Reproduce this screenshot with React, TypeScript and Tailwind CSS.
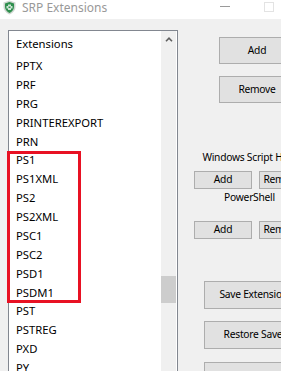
import React from "react";

const items = [
  "PPTX",
  "PRF",
  "PRG",
  "PRINTEREXPORT",
  "PRN",
  "PS1",
  "PS1XML",
  "PS2",
  "PS2XML",
  "PSC1",
  "PSC2",
  "PSD1",
  "PSDM1",
  "PST",
  "PSTREG",
  "PXD",
  "PY",
  "PYC",
];

function ShieldIcon() {
  return (
    <svg width="13" height="15" viewBox="0 0 13 15" className="shrink-0">
      <path d="M6.5 0.5 L12.5 2.5 V7 C12.5 10.5 9.5 13 6.5 14.5 C3.5 13 0.5 10.5 0.5 7 V2.5 Z" fill="#cfd6d0" />
      <path d="M6.5 2 L11 3.5 V7 C11 9.6 8.8 11.7 6.5 13 C4.2 11.7 2 9.6 2 7 V3.5 Z" fill="#2f8f4e" />
      <path d="M5 4.5 H8 V6 H9.5 V8.5 H8 V10 H5 V8.5 H3.5 V6 H5 Z" fill="#e9f3ec" opacity="0.85" />
      <rect x="5.5" y="6.5" width="2" height="1.5" fill="#2f8f4e" />
    </svg>
  );
}

function TitleBar() {
  return (
    <div className="h-[19px] bg-white flex items-center shrink-0">
      <div className="ml-[3px] -mt-[4px]">
        <ShieldIcon />
      </div>
      <span className="ml-[6px] -mt-[4px] text-[#999999] text-[12px] leading-[16px] whitespace-nowrap">
        SRP Extensions
      </span>
      <div className="ml-auto flex items-start -mt-[6px]">
        <div className="w-[10px] h-px bg-[#9a9a9a] mt-[4px]" />
        <div className="ml-[34px] mr-[7px] w-[10px] h-[10px] border border-[#e3e3e3]" />
      </div>
    </div>
  );
}

function ListBox() {
  return (
    <div className="ml-[8px] mt-[11px] w-[170px] h-[360px] shrink-0 border border-[#828790] bg-white flex">
      <div className="w-[152px] pl-[7px] text-black">
        <div className="h-[26px] pt-[3px] leading-[19px]">Extensions</div>
        <div className="relative">
          {items.map((item) => (
            <div key={item} className="h-[18.875px] leading-[18.875px] whitespace-nowrap">
              {item}
            </div>
          ))}
          {/* highlight box drawn over the PS* rows */}
          <div className="absolute left-[-9px] top-[94px] w-[74px] h-[152px] border-[3px] border-[#e81123]" />
        </div>
      </div>
      <div className="w-[15px] mr-[1px] bg-[#f0f0f0] flex flex-col">
        <div className="h-[17px] flex items-center justify-center">
          <svg width="8" height="5" viewBox="0 0 8 5">
            <polyline points="1,4.2 4,1.2 7,4.2" fill="none" stroke="#606060" strokeWidth="1.6" />
          </svg>
        </div>
        <div className="mt-[228px] h-[27px] bg-[#cdcdcd]" />
      </div>
    </div>
  );
}

function Btn({ label, className }: { label: string; className: string }) {
  return (
    <div
      className={`shrink-0 border border-[#adadad] bg-[#e1e1e1] flex items-center justify-center whitespace-nowrap overflow-hidden text-black ${className}`}
    >
      {label}
    </div>
  );
}

function ScriptGroup({ label, gap }: { label: string; gap: string }) {
  return (
    <div className="ml-[16px] w-[111px] flex flex-col items-center">
      <div className="leading-[16px] whitespace-nowrap text-black">{label}</div>
      <div className={`flex gap-[7px] ${gap}`}>
        <Btn label="Add" className="w-[58px] h-[18px]" />
        <Btn label="Remove" className="w-[46px] h-[18px]" />
      </div>
    </div>
  );
}

function RightPanel() {
  return (
    <div className="w-[160px] shrink-0 flex flex-col items-start text-[10.25px] tracking-[-0.25px]">
      <Btn label="Add" className="ml-[41px] mt-[18px] w-[76px] h-[27px]" />
      <Btn label="Remove" className="ml-[41px] mt-[12px] w-[76px] h-[27px]" />

      <div className="mt-[46px]">
        <ScriptGroup label="Windows Script Host" gap="mt-[6px]" />
      </div>
      <ScriptGroup label="PowerShell" gap="mt-[16px]" />

      <Btn label="Save Extensions" className="ml-[26px] mt-[42px] w-[104px] h-[28px]" />
      <Btn label="Restore Saved" className="ml-[26px] mt-[12px] w-[104px] h-[28px]" />
      <Btn label="Remove Saved" className="ml-[26px] mt-[13px] w-[104px] h-[28px]" />
    </div>
  );
}

export default function App() {
  return (
    <div className="w-[281px] h-[371px] overflow-hidden bg-[#f0f0f0] font-['Noto_Sans',sans-serif] text-[11.25px] flex flex-col">
      <TitleBar />
      <div className="flex">
        <ListBox />
        <RightPanel />
      </div>
    </div>
  );
}
